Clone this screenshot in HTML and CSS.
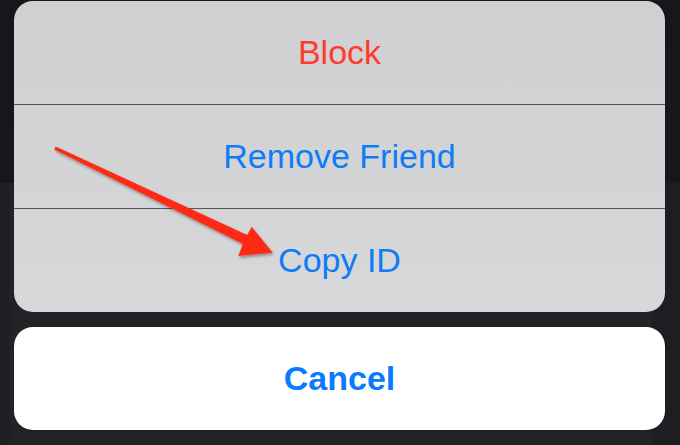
FILE: index.html
```html
<!DOCTYPE html>
<html>
<head>
<meta charset="utf-8">
<link rel="stylesheet" href="styles.css">
</head>
<body>
<div class="screen">
  <div class="sheet">
    <div class="action action-destructive">Block</div>
    <div class="action">Remove Friend</div>
    <div class="action">Copy ID</div>
  </div>
  <div class="cancel">Cancel</div>
  <svg class="arrow" width="680" height="445" viewBox="0 0 680 445">
    <defs>
      <filter id="sh" x="-10%" y="-10%" width="130%" height="140%">
        <feDropShadow dx="1" dy="2" stdDeviation="1.5" flood-color="#000" flood-opacity="0.35"/>
      </filter>
    </defs>
    <polygon filter="url(#sh)" fill="#ff2a17" points="55.7,146.4 247.2,235 251.7,226.7 272.7,252.7 238.3,256 242.8,244 54.3,149.6"/>
  </svg>
</div>
</body>
</html>
```
FILE: styles.css
```css
html, body {
  margin: 0;
  padding: 0;
}
body {
  width: 680px;
  height: 445px;
  overflow: hidden;
  font-family: "Liberation Sans", Arial, sans-serif;
}
.screen {
  position: relative;
  width: 680px;
  height: 445px;
  box-sizing: border-box;
  padding: 1px 15px 0 14px;
  display: flex;
  flex-direction: column;
  gap: 15px;
  background:
    linear-gradient(to bottom, #16171a 0, #16171a 183px, transparent 183px),
    linear-gradient(to right, #1f2023 0, #1f2023 10px, #222327 10px, #222327 652px, #1d1e21 652px);
}
.sheet {
  height: 311px;
  border-radius: 19px;
  overflow: hidden;
  background: linear-gradient(to bottom, #d0d0d2 0%, #d3d4d6 60%, #d7d8da 100%);
  display: flex;
  flex-direction: column;
}
.action {
  height: 103px;
  display: flex;
  align-items: center;
  justify-content: center;
  font-size: 34px;
  color: #0f7cf6;
}
.action + .action {
  border-top: 1px solid #55565a;
}
.action-destructive {
  color: #ff3b30;
}
.cancel {
  height: 103px;
  border-radius: 19px;
  background: #ffffff;
  display: flex;
  align-items: center;
  justify-content: center;
  font-size: 34px;
  font-weight: 700;
  color: #0a7bff;
}
.arrow {
  position: absolute;
  left: 0;
  top: 0;
  pointer-events: none;
}
```
